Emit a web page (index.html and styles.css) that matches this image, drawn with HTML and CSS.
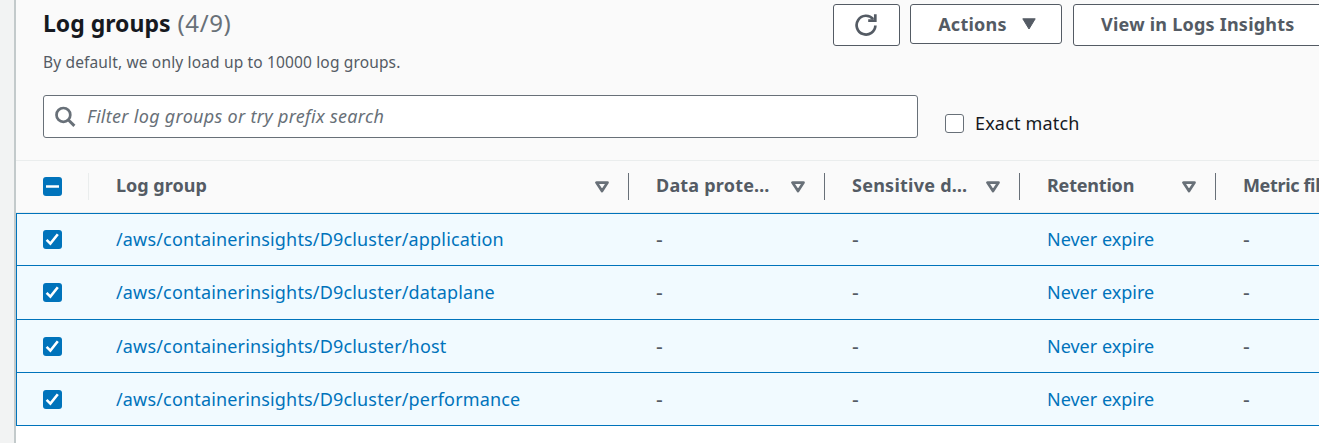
FILE: index.html
```html
<!DOCTYPE html>
<html lang="en">
<head>
<meta charset="utf-8">
<title>Log groups</title>
<link rel="stylesheet" href="styles.css">
</head>
<body>
<svg class="sprite" aria-hidden="true">
  <symbol id="check" viewBox="0 0 19 19"><path d="M3.6 9.8 7.4 13.6 14.8 4.3" fill="none" stroke="#fff" stroke-width="2.6"/></symbol>
  <symbol id="minus" viewBox="0 0 19 19"><path d="M3 9.5h13" fill="none" stroke="#fff" stroke-width="2.6"/></symbol>
  <symbol id="sort" viewBox="0 0 14 12"><path d="M1.5 1.6h11L7 10z" fill="none" stroke="#687078" stroke-width="2.7" stroke-linejoin="round"/></symbol>
</svg>
<main class="panel">
  <header class="header">
    <div class="heading">
      <h1 class="title"><span class="title-name">Log groups</span><span class="count">(4/9)</span></h1>
      <p class="description">By default, we only load up to 10000 log groups.</p>
    </div>
    <div class="actions">
      <button class="button refresh" aria-label="Refresh"><svg width="24" height="24" viewBox="0 0 24 24"><path d="M21.4 12.5A9.4 9.4 0 1 1 19.2 6.1" fill="none" stroke="#545b64" stroke-width="2.7"/><path d="M21.3 1.2V7.7H14.2" fill="none" stroke="#545b64" stroke-width="2.7"/></svg></button>
      <button class="button menu"><span class="actions-label">Actions</span><svg width="14" height="12" viewBox="0 0 14 12"><path d="M.8.8h12.4L7 11z" fill="#545b64" stroke="#545b64" stroke-linejoin="round"/></svg></button>
      <button class="button insights"><span class="insights-label">View in Logs Insights</span></button>
    </div>
  </header>
  <div class="filters">
    <div class="search">
      <svg width="21" height="21" viewBox="0 0 21 21"><circle cx="8.4" cy="8.9" r="6.9" fill="none" stroke="#687078" stroke-width="2.7"/><path d="M13.2 13.7 19.4 19.9" stroke="#687078" stroke-width="2.9"/></svg>
      <span class="placeholder">Filter log groups or try prefix search</span>
    </div>
    <label class="exact"><span class="box"></span><span class="exact-label">Exact match</span></label>
  </div>
  <div class="table">
    <div class="row head">
      <div class="select"><svg class="tick"><use href="#minus"/></svg></div>
      <div class="cell name"><span class="h-group">Log group</span><svg class="sort"><use href="#sort"/></svg></div>
      <div class="cell"><span class="h-data">Data prote…</span><svg class="sort"><use href="#sort"/></svg></div>
      <div class="cell"><span class="h-sens">Sensitive d…</span><svg class="sort"><use href="#sort"/></svg></div>
      <div class="cell"><span class="h-ret">Retention</span><svg class="sort"><use href="#sort"/></svg></div>
      <div class="cell"><span class="h-metric">Metric fil</span></div>
    </div>
    <div class="row item"><div class="select"><svg class="tick"><use href="#check"/></svg></div><div class="cell"><a class="link">/aws/containerinsights/D9cluster/application</a></div><div class="cell dash">-</div><div class="cell dash">-</div><div class="cell"><a class="expire">Never expire</a></div><div class="cell dash">-</div></div>
    <div class="row item"><div class="select"><svg class="tick"><use href="#check"/></svg></div><div class="cell"><a class="link">/aws/containerinsights/D9cluster/dataplane</a></div><div class="cell dash">-</div><div class="cell dash">-</div><div class="cell"><a class="expire">Never expire</a></div><div class="cell dash">-</div></div>
    <div class="row item"><div class="select"><svg class="tick"><use href="#check"/></svg></div><div class="cell"><a class="link">/aws/containerinsights/D9cluster/host</a></div><div class="cell dash">-</div><div class="cell dash">-</div><div class="cell"><a class="expire">Never expire</a></div><div class="cell dash">-</div></div>
    <div class="row item"><div class="select"><svg class="tick"><use href="#check"/></svg></div><div class="cell"><a class="link">/aws/containerinsights/D9cluster/performance</a></div><div class="cell dash">-</div><div class="cell dash">-</div><div class="cell"><a class="expire">Never expire</a></div><div class="cell dash">-</div></div>
  </div>
</main>
</body>
</html>
```
FILE: styles.css
```css
* { box-sizing: border-box; }
body { margin: 0; width: 1319px; height: 443px; overflow: hidden; padding-left: 14px; background: #f2f3f3; font: 18px/24px "Noto Sans", sans-serif; color: #545b64; }
.sprite { display: none; }
svg { display: block; flex: none; }
.panel { height: 443px; border-left: 2px solid #c3cacb; background: #fff; overflow: hidden; }
.header { display: flex; justify-content: space-between; height: 95px; padding: 4px 0 0 27px; background: #fafafa; }
.heading, .title, .description, .button span, .cell span, .cell a { white-space: nowrap; }
.title { margin: 0; display: flex; gap: 7px; font-size: 23px; line-height: 38px; color: #16191f; }
.count { font-size: 24px; letter-spacing: .6px; font-weight: 400; color: #687078; }
.description { margin: 8px 0 0; font-size: 15.5px; line-height: 24px; letter-spacing: .15px; }
.actions { display: flex; align-items: flex-start; margin-right: -27px; }
.button { display: flex; align-items: center; justify-content: center; height: 42px; padding: 0 0 2px; border: 1px solid #545b64; border-radius: 3px; background: #fff; font: bold 18px/24px "Noto Sans", sans-serif; color: #545b64; }
.refresh { width: 67px; margin-right: 10px; padding: 0 2px 0 0; }
.menu { width: 152px; height: 40px; gap: 15px; margin-right: 11px; padding: 0 0 1px 2px; letter-spacing: .25px; }
.insights { width: 273px; justify-content: flex-start; padding-left: 27px; letter-spacing: .23px; }
.filters { display: flex; height: 65px; padding-left: 27px; background: #fafafa; }
.search { display: flex; align-items: center; gap: 11px; width: 875px; height: 43px; padding-left: 11px; border: 1px solid #687078; border-radius: 3px; background: #fff; }
.placeholder { margin-top: -2px; font-style: italic; letter-spacing: .3px; color: #687078; }
.exact { display: flex; align-items: center; gap: 11px; height: 57px; margin-left: 27px; color: #16191f; }
.exact-label { margin-top: -2px; letter-spacing: .17px; }
.box { width: 19px; height: 19px; border: 1px solid #687078; border-radius: 3px; background: #fff; }
.table { width: 1303px; }
.row { display: grid; grid-template-columns: 73px 540px 196px 195px 196px 103px; align-items: center; }
.head { height: 53px; border-top: 1px solid #eaeded; border-bottom: 1px solid #eaeded; background: #fafafa; font-weight: 700; }
.select { height: 27px; padding: 4px 0 0 27px; }
.head .select { border-right: 1px solid #eaeded; }
.tick { width: 19px; height: 19px; border-radius: 3px; background: #0073bb; }
.cell { display: flex; align-items: center; justify-content: space-between; height: 27px; padding: 0 19px 0 27px; }
.head .cell { border-right: 1px solid #687078; }
.head .cell:last-child { padding-right: 0; border-right: 0; overflow: hidden; }
.cell span { margin-top: -4px; }
.h-data { letter-spacing: .2px; }
.h-sens { letter-spacing: .25px; }
.h-ret { letter-spacing: -.2px; }
.h-metric { letter-spacing: -.35px; }
.sort { width: 14px; height: 12px; }
.item { height: 53px; border: solid #0073bb; border-width: 0 0 1px 1px; background: #f1faff; }
.item .select { margin-left: -1px; }
.item .cell { margin-left: -1px; margin-right: 1px; padding-right: 0; }
.item:nth-child(2) { height: 53px; border-top-width: 1px; }
.item:nth-child(2) .cell { padding-bottom: 2px; }
.item:nth-child(3) { height: 54px; padding-bottom: 1px; }
.item:nth-child(4) .cell { padding-bottom: 1px; }
.link, .expire { color: #0073bb; }
.link { letter-spacing: .165px; }
.dash { font-size: 21px; }
```
